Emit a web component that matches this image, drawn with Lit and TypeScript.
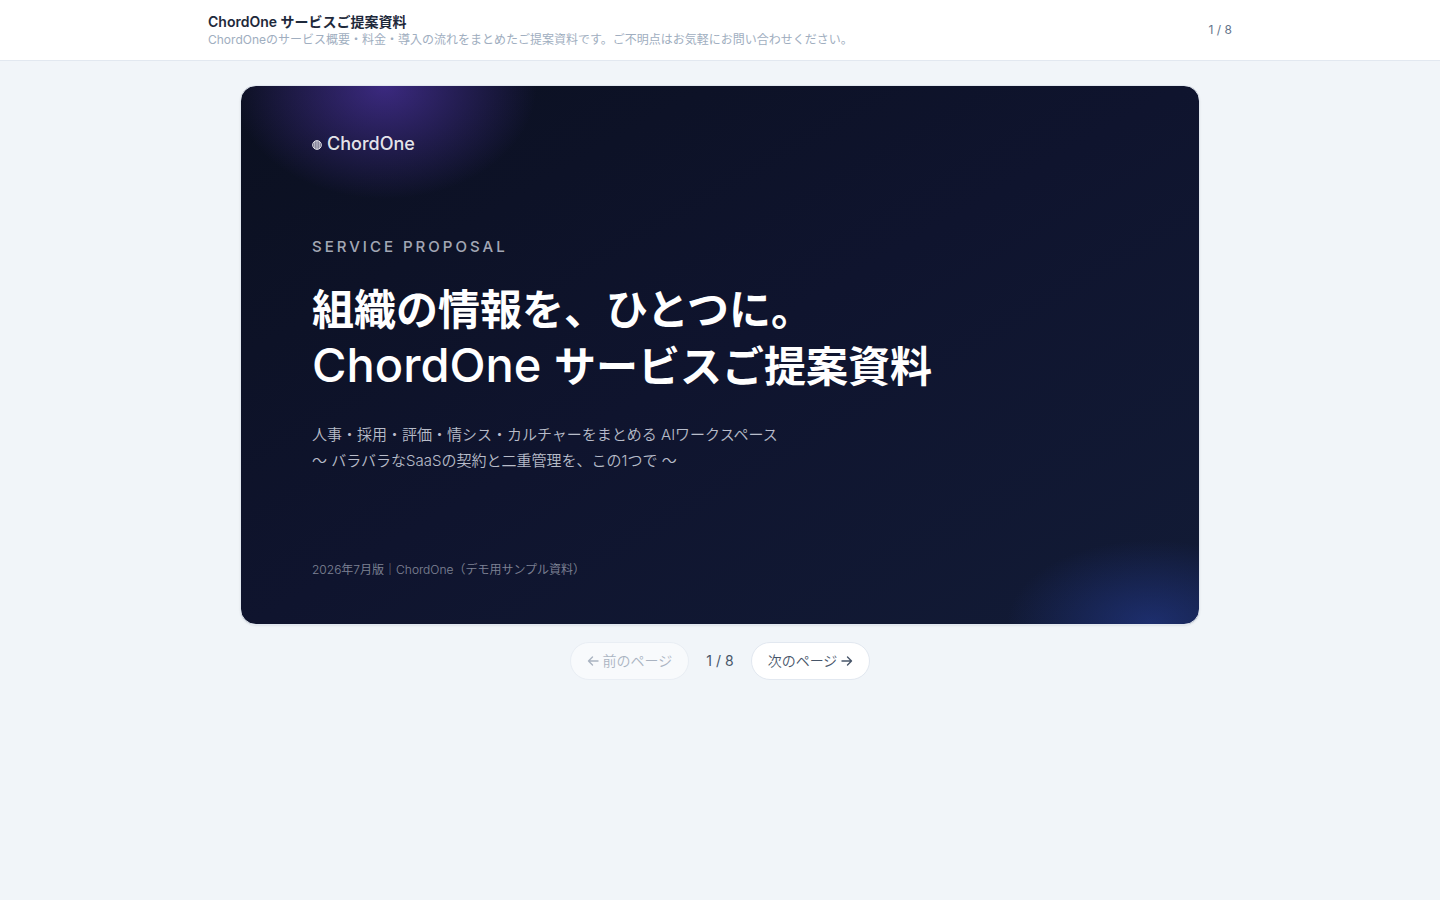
import { LitElement, html, css } from "lit";
import { customElement, state } from "lit/decorators.js";

const TOTAL = 8;

@customElement("app-root")
export class AppRoot extends LitElement {
  static styles = css`
    :host {
      display: block;
      min-height: 100vh;
      background: #f1f5f9;
      color: #0f172a;
      font-family: Inter, "Noto Sans CJK JP", sans-serif;
    }
    * {
      box-sizing: border-box;
    }
    h1,
    h2,
    p {
      margin: 0;
    }
    header {
      background: #fff;
      border-bottom: 1px solid #e2e8f0;
    }
    .bar {
      max-width: 1024px;
      margin: 0 auto;
      padding: 12px 0;
      display: flex;
      align-items: center;
      justify-content: space-between;
    }
    .title {
      font-size: 14px;
      line-height: 20px;
      font-weight: 600;
      color: #1e293b;
    }
    .lead {
      font-size: 12px;
      line-height: 16px;
      font-weight: 400;
      color: #a0aec0;
    }
    .count {
      font-size: 12px;
      line-height: 16px;
      color: #64748b;
    }
    main {
      max-width: 960px;
      margin: 0 auto;
      padding: 24px 0;
    }
    .slide {
      aspect-ratio: 16 / 9;
      display: flex;
      flex-direction: column;
      justify-content: space-between;
      padding: 45px 71px 44px;
      border: 1px solid #e2e8f0;
      border-radius: 16px;
      box-shadow: 0 1px 2px rgba(15, 23, 42, 0.08);
      color: #fff;
      background:
        radial-gradient(152px 113px at 15% 0, rgba(91, 58, 190, 0.6), rgba(91, 58, 190, 0) 100%),
        radial-gradient(144px 84px at 95% 100%, rgba(40, 66, 165, 0.5), rgba(40, 66, 165, 0) 100%),
        linear-gradient(150deg, #0b1020, #0f142e 50%, #121b36);
    }
    .brand {
      display: flex;
      align-items: center;
      gap: 5px;
      font-size: 18px;
      line-height: 26px;
      font-weight: 500;
      color: rgba(255, 255, 255, 0.9);
    }
    .mark {
      width: 10px;
      height: 10px;
      margin-top: 2px;
    }
    .intro {
      padding-bottom: 8px;
    }
    .kicker {
      font-size: 15px;
      line-height: 24px;
      font-weight: 500;
      letter-spacing: 3px;
      color: rgba(241, 245, 255, 0.68);
    }
    .headline {
      margin-top: 22px;
      font-size: 42px;
      line-height: 57px;
      font-weight: 600;
    }
    .headline span {
      font-size: 47px;
      line-height: 1;
      font-weight: 550;
    }
    .sub {
      margin-top: 27px;
      font-size: 15px;
      line-height: 26px;
      font-weight: 350;
      color: rgba(241, 245, 255, 0.75);
    }
    .note {
      font-size: 12px;
      line-height: 20px;
      font-weight: 350;
      color: rgba(241, 245, 255, 0.5);
    }
    .pager {
      margin-top: 17px;
      display: flex;
      align-items: center;
      justify-content: center;
      gap: 17px;
      font-size: 14px;
      line-height: 20px;
      color: #475569;
    }
    button {
      display: flex;
      align-items: center;
      gap: 4px;
      padding: 8px 16px;
      border: 1px solid #e2e8f0;
      border-radius: 19px;
      background: #fff;
      color: #475569;
      font: 350 14px/20px Inter, "Noto Sans CJK JP", sans-serif;
    }
    button:disabled {
      opacity: 0.5;
      color: #64748b;
    }
    .arrow {
      width: 12px;
      height: 12px;
    }
  `;

  @state() private page = 1;

  private go(step: number) {
    this.page = Math.min(TOTAL, Math.max(1, this.page + step));
  }

  render() {
    return html`
      <header>
        <div class="bar">
          <div>
            <h1 class="title">ChordOne サービスご提案資料</h1>
            <p class="lead">ChordOneのサービス概要・料金・導入の流れをまとめたご提案資料です。ご不明点はお気軽にお問い合わせください。</p>
          </div>
          <span class="count">${this.page} / ${TOTAL}</span>
        </div>
      </header>
      <main>
        <section class="slide">
          <div class="brand">
            <svg class="mark" viewBox="0 0 10 10" fill="none" stroke="currentColor" aria-hidden="true">
              <circle cx="5" cy="5" r="4.4" stroke-width="0.9" fill="currentColor" fill-opacity="0.4" />
              <path d="M2.6 1.5v7M4.2 .8v8.4M5.8 .8v8.4M7.4 1.5v7" stroke-width="0.6" />
            </svg>
            <span>ChordOne</span>
          </div>
          <div class="intro">
            <p class="kicker">SERVICE PROPOSAL</p>
            <h2 class="headline">組織の情報を、ひとつに。<br /><span>ChordOne </span>サービスご提案資料</h2>
            <p class="sub">人事・採用・評価・情シス・カルチャーをまとめる AIワークスペース<br />〜 バラバラなSaaSの契約と二重管理を、この1つで 〜</p>
          </div>
          <p class="note">2026年7月版｜ChordOne（デモ用サンプル資料）</p>
        </section>
        <nav class="pager">
          <button ?disabled=${this.page === 1} @click=${() => this.go(-1)}>
            <svg class="arrow" viewBox="0 0 12 12" fill="none" stroke="currentColor" stroke-width="1.4" stroke-linecap="round" stroke-linejoin="round" aria-hidden="true"><path d="M11 6H1.500M5.500 2l-4 4 4 4" /></svg>
            前のページ
          </button>
          <span>${this.page} / ${TOTAL}</span>
          <button ?disabled=${this.page === TOTAL} @click=${() => this.go(1)}>
            次のページ
            <svg class="arrow" viewBox="0 0 12 12" fill="none" stroke="currentColor" stroke-width="1.4" stroke-linecap="round" stroke-linejoin="round" aria-hidden="true"><path d="M1 6h9.500M6.500 2l4 4-4 4" /></svg>
          </button>
        </nav>
      </main>
    `;
  }
}
